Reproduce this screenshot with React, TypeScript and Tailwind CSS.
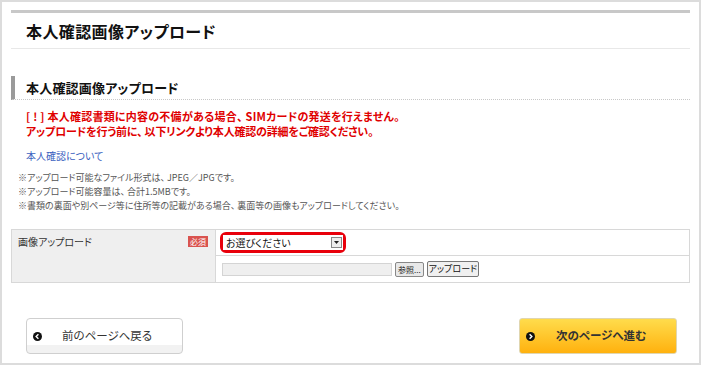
import React from "react";

const jp = { fontFamily: '"Noto Sans CJK JP", "Noto Sans", sans-serif' };

function ArrowDot({ dir }: { dir: "left" | "right" }) {
  return (
    <svg width="9" height="9" viewBox="0 0 10 10" className="shrink-0">
      <circle cx="5" cy="5" r="5" fill="#111" />
      {dir === "left" ? (
        <path d="M6 2.5 L3.5 5 L6 7.5" stroke="#fff" strokeWidth="1.6" fill="none" />
      ) : (
        <path d="M4 2.5 L6.5 5 L4 7.5" stroke="#fff" strokeWidth="1.6" fill="none" />
      )}
    </svg>
  );
}

export default function App() {
  return (
    <div
      className="w-[701px] h-[365px] border-2 border-[#dcdcdc] bg-white overflow-hidden [font-feature-settings:'palt']"
      style={jp}
    >
      <div className="px-[9px] pt-[8px]">
        {/* page header */}
        <div className="h-[3px] bg-[#c8c8c8]" />
        <div className="h-[36px] flex items-center pl-[15px] border-b border-[#e8e8e8]">
          <h1 className="text-[16px] font-bold text-[#111] tracking-[0.4px]">本人確認画像アップロード</h1>
        </div>

        {/* section title */}
        <div className="mt-[27px] h-[24px] flex items-center border-l-4 border-[#9a9a9a] pl-[11px] border-b border-b-[#c8c8c8] [border-bottom-style:dotted]">
          <h2 className="text-[13px] font-bold text-[#111] tracking-[0.2px]">本人確認画像アップロード</h2>
        </div>

        <div className="pl-[15px] pt-[9px] text-[11px] font-bold text-[#e00000] leading-[15px]">
          <p className="tracking-[0.25px]">[ ! ] 本人確認書類に内容の不備がある場合、 SIMカードの発送を行えません。</p>
          <p className="tracking-[-0.2px]">アップロードを行う前に、 以下リンクより本人確認の詳細をご確認ください。</p>
        </div>

        <div className="pl-[15px] mt-[9px] text-[10px] text-[#3a5fc0] leading-[15px]">
          <a href="#">本人確認について</a>
        </div>

        <div className="pl-[7px] mt-[8px] text-[9px] text-[#555] leading-[14px]">
          <p>※アップロード可能なファイル形式は、 JPEG／JPGです。</p>
          <p>※アップロード可能容量は、 合計1.5MBです。</p>
          <p>※書類の裏面や別ページ等に住所等の記載がある場合、 裏面等の画像もアップロードしてください。</p>
        </div>

        {/* upload table */}
        <div className="mt-[16px] flex border border-[#d8d8d8]">
          <div className="w-[204px] bg-[#efefef] border-r border-[#d8d8d8] flex justify-between pl-[6px] pr-[7px] pt-[5px]">
            <span className="text-[10px] text-[#333] leading-[14px]">画像アップロード</span>
            <span className="h-[11px] px-[2px] bg-[#d9534f] text-white text-[8px] leading-[11px] mt-[1px]">必須</span>
          </div>
          <div className="flex-1 flex flex-col">
            <div className="h-[26px] flex items-center pl-[4px] border-b border-[#d8d8d8]">
              <div className="border-[3px] border-[#e8000b] rounded-[6px] p-0">
                <div className="w-[120px] h-[15px] bg-white flex items-center justify-between pl-[3px] pr-[1px] text-[10px] text-[#111]">
                  <span>お選びください</span>
                  <span className="w-[11px] h-[11px] border border-[#888] bg-[#eee] flex items-center justify-center">
                    <svg width="5" height="3" viewBox="0 0 5 3"><path d="M0 0 H5 L2.5 3 Z" fill="#222" /></svg>
                  </span>
                </div>
              </div>
            </div>
            <div className="h-[26px] flex items-center pl-[6px] gap-[3px]">
              <div className="w-[170px] h-[13px] bg-[#efefef] border border-[#d4d4d4]" />
              <button className="h-[15px] px-[2px] border border-[#888] bg-[#e8e8e8] rounded-[2px] text-[8px] leading-[13px] text-[#222]">参照...</button>
              <button className="h-[16px] px-[1px] border border-[#777] bg-[#f0f0f0] rounded-[2px] text-[9px] leading-[14px] text-[#111]">アップロード</button>
            </div>
          </div>
        </div>

        {/* nav buttons */}
        <div className="mt-[35px] flex justify-between pl-[15px] pr-[13px]">
          <button className="w-[157px] h-[36px] rounded-[4px] border border-[#cfcfcf] bg-[linear-gradient(#fff_0%,#fff_75%,#f2f2f2_76%,#f2f2f2_100%)] flex items-center pl-[6px]">
            <ArrowDot dir="left" />
            <span className="ml-[20px] text-[11.5px] text-[#333]">前のページへ戻る</span>
          </button>
          <button className="w-[158px] h-[36px] rounded-[3px] border border-[#e0d6b0] bg-[linear-gradient(#ffdc4c,#ffb10e)] flex items-center pl-[6px]">
            <ArrowDot dir="right" />
            <span className="ml-[21px] text-[11.5px] font-bold text-[#333]">次のページへ進む</span>
          </button>
        </div>
      </div>
    </div>
  );
}
